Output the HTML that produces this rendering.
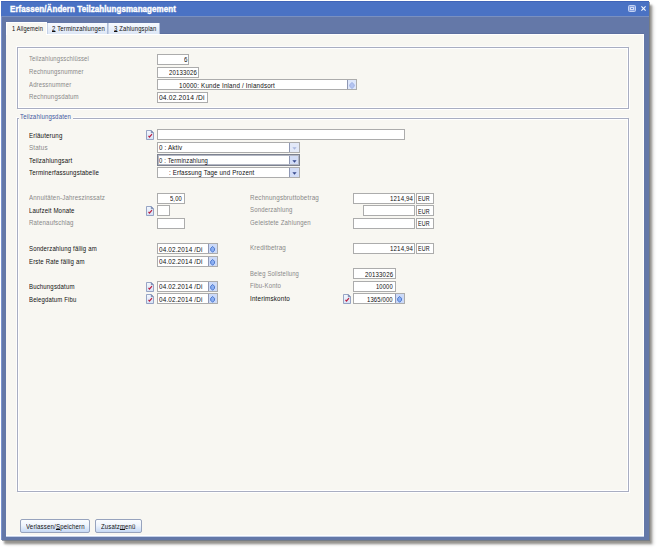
<!DOCTYPE html>
<html><head><meta charset="utf-8"><style>
html,body{margin:0;padding:0;width:658px;height:548px;overflow:hidden;background:#fff}
body{position:relative;font-family:"Liberation Sans",sans-serif}
.a{position:absolute;box-sizing:border-box}
.t{position:absolute;white-space:nowrap;line-height:1;transform-origin:0 0;letter-spacing:0.2px}
.t u{text-decoration-thickness:1px;text-underline-offset:0px}
.win{left:1px;top:1px;width:648px;height:539px;background:#6478a8;box-shadow:1px 1px 0 rgba(105,115,130,.7),3px 4px 2px rgba(95,92,85,.6),5px 5px 3px rgba(0,0,0,.1)}
.title{left:1px;top:1px;width:648px;height:15px;background:#4a72c4}
.edge{left:1px;top:16px;width:1px;height:524px;background:#7a92cc}
.panel{left:6px;top:34px;width:638px;height:502px;background:#f8f7f2;border-top:1px solid #fff;border-right:1px solid #fff;border-bottom:1px solid #fff}
.tab1{left:6px;top:22px;width:41px;height:13px;background:#f8f7f2;border:1px solid #fff;border-bottom:none}
.tab{top:23px;height:11px;background:linear-gradient(#f7faff,#dde7f6);border-left:1px solid #c6d2e6;border-right:1px solid #aebcd8}
.grp{border:1px solid #a9aec2;box-shadow:inset 1px 1px 0 #fff,inset -1px -1px 0 #fff,1px 1px 0 #fff,-1px -1px 0 #fdfdfd}
.box{background:#fff;border:1px solid #acacac}
.cbtn{background:#d3ddf7;border-left:1px solid #8f98b4}
.spin{background:#ccdaf8;border-left:1px solid #8f98b4}
.btn{border:1px solid #97a3bd;border-radius:2px;background:linear-gradient(#fbfdff 0%,#eef4fc 45%,#c6d9f5 100%)}
</style></head><body><div style="position:absolute;left:0;top:0;width:658px;height:548px">
<div class="a win"></div>
<div class="a title"></div>
<div class="a edge"></div>
<div class="a" style="left:1px;top:16px;width:648px;height:1px;background:#7a90c0"></div>
<div class="a" style="left:1px;top:1px;width:648px;height:1px;background:#4064b8"></div>
<div class="a" style="left:6px;top:33px;width:638px;height:1px;background:#5d70a0"></div>
<!-- title icons -->
<div class="a" style="left:628px;top:5px;width:8px;height:7px;border:1px solid #c4d2f2;border-radius:1.5px;background:#8aa4e2"></div>
<div class="a" style="left:630px;top:7px;width:4px;height:3px;border:1px solid #d4ddf4;border-radius:0.5px;background:#6587d4"></div>
<svg class="a" style="left:640.5px;top:6px" width="5" height="5" viewBox="0 0 5 5"><path d="M0.4 0.4L4.6 4.6M4.6 0.4L0.4 4.6" stroke="#f4f7ff" stroke-width="1.1"/></svg>

<div class="a panel"></div>
<div class="a" style="left:6px;top:536px;width:638px;height:1px;background:#c4d0e8"></div>
<div class="a tab1"></div>
<div class="a tab" style="left:47px;width:61px"></div>
<div class="a tab" style="left:108px;width:52px"></div>

<!-- group 1 -->
<div class="a grp" style="left:17px;top:47px;width:612px;height:62px"></div>
<div class="a box" style="left:157px;top:54px;width:32px;height:11px"></div>
<div class="a box" style="left:157px;top:67px;width:42px;height:11px"></div>
<div class="a box" style="left:157px;top:79px;width:200px;height:11px"></div>
<div class="a spin" style="left:347px;top:80px;width:9px;height:9px;background:#dee7fb"></div>
<div class="a box" style="left:157px;top:92px;width:51px;height:11px"></div>

<!-- group 2 -->
<div class="a grp" style="left:17px;top:118px;width:612px;height:374px"></div>
<div class="a" style="left:19px;top:116px;width:54px;height:4px;background:#f8f7f2"></div>

<div class="a box" style="left:157px;top:129px;width:248px;height:11px"></div>
<div class="a box" style="left:157px;top:142px;width:143px;height:11px"></div>
<div class="a cbtn" style="left:289px;top:143px;width:10px;height:9px;background:#e3e9f8"></div>
<div class="a box" style="left:157px;top:154px;width:143px;height:12px;border:1px solid #7d8290;box-shadow:inset 0 0 0 1px #b4b8c4"></div>
<div class="a cbtn" style="left:289px;top:156px;width:9px;height:8px"></div>
<div class="a box" style="left:157px;top:167px;width:143px;height:11px"></div>
<div class="a cbtn" style="left:289px;top:168px;width:10px;height:9px"></div>

<div class="a box" style="left:157px;top:193px;width:28px;height:11px"></div>
<div class="a box" style="left:157px;top:205px;width:13px;height:11px"></div>
<div class="a box" style="left:157px;top:218px;width:28px;height:11px"></div>

<div class="a box" style="left:353px;top:193px;width:62px;height:11px"></div>
<div class="a box" style="left:416px;top:193px;width:18px;height:11px"></div>
<div class="a box" style="left:363px;top:205px;width:52px;height:11px"></div>
<div class="a box" style="left:416px;top:205px;width:18px;height:11px"></div>
<div class="a box" style="left:353px;top:218px;width:62px;height:11px"></div>
<div class="a box" style="left:416px;top:218px;width:18px;height:11px"></div>

<div class="a box" style="left:157px;top:243px;width:61px;height:11px"></div>
<div class="a spin" style="left:208px;top:244px;width:9px;height:9px"></div>
<div class="a box" style="left:157px;top:256px;width:61px;height:11px"></div>
<div class="a spin" style="left:208px;top:257px;width:9px;height:9px"></div>

<div class="a box" style="left:353px;top:243px;width:62px;height:11px"></div>
<div class="a box" style="left:416px;top:243px;width:18px;height:11px"></div>

<div class="a box" style="left:353px;top:268px;width:43px;height:11px"></div>
<div class="a box" style="left:353px;top:281px;width:43px;height:11px"></div>
<div class="a box" style="left:353px;top:293px;width:52px;height:11px"></div>
<div class="a spin" style="left:395px;top:294px;width:9px;height:9px"></div>

<div class="a box" style="left:157px;top:281px;width:61px;height:11px"></div>
<div class="a spin" style="left:208px;top:282px;width:9px;height:9px"></div>
<div class="a box" style="left:157px;top:293px;width:61px;height:11px"></div>
<div class="a spin" style="left:208px;top:294px;width:9px;height:9px"></div>

<!-- buttons -->
<div class="a btn" style="left:20px;top:519px;width:70px;height:14px"></div>
<div class="a btn" style="left:95px;top:519px;width:47px;height:14px"></div>

<!--ICONS-->
<svg width="0" height="0" style="position:absolute"><defs><linearGradient id="dg" x1="0" y1="0" x2="0" y2="1"><stop offset="0" stop-color="#f4f8fe"/><stop offset="1" stop-color="#d6e2f6"/></linearGradient></defs></svg>
<svg class="a" style="left:146px;top:130px" width="8" height="10" viewBox="0 0 8 10"><path d="M0.5 0.5H5.2L7.5 2.8V9.5H0.5Z" fill="url(#dg)" stroke="#8090b8" stroke-width="0.8"/><path d="M5.2 0.6V2.8H7.4Z" fill="#7c8cb6" stroke="#6c7ca6" stroke-width="0.5"/><path d="M2.5 5.8L3.5 7L6 4.2" fill="none" stroke="#bc2140" stroke-width="1.15"/></svg>
<svg class="a" style="left:146px;top:206px" width="8" height="10" viewBox="0 0 8 10"><path d="M0.5 0.5H5.2L7.5 2.8V9.5H0.5Z" fill="url(#dg)" stroke="#8090b8" stroke-width="0.8"/><path d="M5.2 0.6V2.8H7.4Z" fill="#7c8cb6" stroke="#6c7ca6" stroke-width="0.5"/><path d="M2.5 5.8L3.5 7L6 4.2" fill="none" stroke="#bc2140" stroke-width="1.15"/></svg>
<svg class="a" style="left:146px;top:281.5px" width="8" height="10" viewBox="0 0 8 10"><path d="M0.5 0.5H5.2L7.5 2.8V9.5H0.5Z" fill="url(#dg)" stroke="#8090b8" stroke-width="0.8"/><path d="M5.2 0.6V2.8H7.4Z" fill="#7c8cb6" stroke="#6c7ca6" stroke-width="0.5"/><path d="M2.5 5.8L3.5 7L6 4.2" fill="none" stroke="#bc2140" stroke-width="1.15"/></svg>
<svg class="a" style="left:146px;top:293.5px" width="8" height="10" viewBox="0 0 8 10"><path d="M0.5 0.5H5.2L7.5 2.8V9.5H0.5Z" fill="url(#dg)" stroke="#8090b8" stroke-width="0.8"/><path d="M5.2 0.6V2.8H7.4Z" fill="#7c8cb6" stroke="#6c7ca6" stroke-width="0.5"/><path d="M2.5 5.8L3.5 7L6 4.2" fill="none" stroke="#bc2140" stroke-width="1.15"/></svg>
<svg class="a" style="left:343px;top:294px" width="8" height="10" viewBox="0 0 8 10"><path d="M0.5 0.5H5.2L7.5 2.8V9.5H0.5Z" fill="url(#dg)" stroke="#8090b8" stroke-width="0.8"/><path d="M5.2 0.6V2.8H7.4Z" fill="#7c8cb6" stroke="#6c7ca6" stroke-width="0.5"/><path d="M2.5 5.8L3.5 7L6 4.2" fill="none" stroke="#bc2140" stroke-width="1.15"/></svg>
<svg class="a" style="left:349.2px;top:81.6px" width="6" height="7" viewBox="0 0 6 7"><path d="M3 0.5L5.2 2.6V4.4L3 6.5L0.8 4.4V2.6Z" fill="#b4c4f0" stroke="#a0b2e6" stroke-width="1"/></svg>
<svg class="a" style="left:210px;top:246px" width="6" height="7" viewBox="0 0 6 7"><path d="M2.6 0.4L4.5 2.3V4.3L2.6 6.3L0.7 4.3V2.3Z" fill="#8cb0f2" stroke="#4470c8" stroke-width="0.9"/></svg>
<svg class="a" style="left:210px;top:259px" width="6" height="7" viewBox="0 0 6 7"><path d="M2.6 0.4L4.5 2.3V4.3L2.6 6.3L0.7 4.3V2.3Z" fill="#8cb0f2" stroke="#4470c8" stroke-width="0.9"/></svg>
<svg class="a" style="left:210px;top:284px" width="6" height="7" viewBox="0 0 6 7"><path d="M2.6 0.4L4.5 2.3V4.3L2.6 6.3L0.7 4.3V2.3Z" fill="#8cb0f2" stroke="#4470c8" stroke-width="0.9"/></svg>
<svg class="a" style="left:210px;top:296px" width="6" height="7" viewBox="0 0 6 7"><path d="M2.6 0.4L4.5 2.3V4.3L2.6 6.3L0.7 4.3V2.3Z" fill="#8cb0f2" stroke="#4470c8" stroke-width="0.9"/></svg>
<svg class="a" style="left:397px;top:296px" width="6" height="7" viewBox="0 0 6 7"><path d="M2.6 0.4L4.5 2.3V4.3L2.6 6.3L0.7 4.3V2.3Z" fill="#8cb0f2" stroke="#4470c8" stroke-width="0.9"/></svg>
<svg class="a" style="left:292px;top:146.5px" width="5" height="3" viewBox="0 0 5 3"><path d="M0.4 0.2H4.6L2.5 2.8Z" fill="#a9b6de"/></svg>
<svg class="a" style="left:292px;top:159.5px" width="5" height="3" viewBox="0 0 5 3"><path d="M0.4 0.2H4.6L2.5 2.8Z" fill="#34478c"/></svg>
<svg class="a" style="left:292px;top:172px" width="5" height="3" viewBox="0 0 5 3"><path d="M0.4 0.2H4.6L2.5 2.8Z" fill="#34478c"/></svg>
<!--/ICONS-->
<div class="t" style="left:10.00px;top:4.72px;font-size:8.6px;color:#ffffff;font-weight:bold;transform:scaleX(0.925);letter-spacing:0.1px;-webkit-text-stroke:0.4px #fff">Erfassen/Ändern Teilzahlungsmanagement</div>
<div class="t" style="left:11.50px;top:24.50px;font-size:7.8px;color:#101010;font-weight:normal;transform:scaleX(0.729);">1 Allgemein</div>
<div class="t" style="left:52.00px;top:24.80px;font-size:7.8px;color:#101010;font-weight:normal;transform:scaleX(0.766);"><u>2</u> Terminzahlungen</div>
<div class="t" style="left:113.70px;top:24.80px;font-size:7.8px;color:#101010;font-weight:normal;transform:scaleX(0.757);"><u>3</u> Zahlungsplan</div>
<div class="t" style="left:29.00px;top:55.30px;font-size:7.8px;color:#888888;font-weight:normal;transform:scaleX(0.758);">Teilzahlungsschlüssel</div>
<div class="t" style="left:29.00px;top:68.30px;font-size:7.8px;color:#888888;font-weight:normal;transform:scaleX(0.769);">Rechnungsnummer</div>
<div class="t" style="left:29.00px;top:80.50px;font-size:7.8px;color:#888888;font-weight:normal;transform:scaleX(0.765);">Adressnummer</div>
<div class="t" style="left:29.00px;top:92.80px;font-size:7.8px;color:#888888;font-weight:normal;transform:scaleX(0.779);">Rechnungsdatum</div>
<div class="t" style="left:183.70px;top:56.00px;font-size:7.8px;color:#101010;font-weight:normal;transform:scaleX(0.792);">6</div>
<div class="t" style="left:168.50px;top:69.00px;font-size:7.8px;color:#101010;font-weight:normal;transform:scaleX(0.771);">20133026</div>
<div class="t" style="left:179.40px;top:81.50px;font-size:7.8px;color:#101010;font-weight:normal;transform:scaleX(0.806);">10000: Kunde Inland / Inlandsort</div>
<div class="t" style="left:158.80px;top:94.00px;font-size:7.8px;color:#101010;font-weight:normal;transform:scaleX(0.854);">04.02.2014 /Di</div>
<div class="t" style="left:20.30px;top:113.40px;font-size:7.8px;color:#4258a0;font-weight:normal;transform:scaleX(0.775);">Teilzahlungsdaten</div>
<div class="t" style="left:29.30px;top:131.50px;font-size:7.8px;color:#101010;font-weight:normal;transform:scaleX(0.788);">Erläuterung</div>
<div class="t" style="left:29.30px;top:143.90px;font-size:7.8px;color:#888888;font-weight:normal;transform:scaleX(0.802);">Status</div>
<div class="t" style="left:29.30px;top:156.60px;font-size:7.8px;color:#101010;font-weight:normal;transform:scaleX(0.789);">Teilzahlungsart</div>
<div class="t" style="left:29.30px;top:169.30px;font-size:7.8px;color:#101010;font-weight:normal;transform:scaleX(0.786);">Terminerfassungstabelle</div>
<div class="t" style="left:158.70px;top:144.30px;font-size:7.8px;color:#101010;font-weight:normal;transform:scaleX(0.800);">0 : Aktiv</div>
<div class="t" style="left:158.70px;top:157.00px;font-size:7.8px;color:#101010;font-weight:normal;transform:scaleX(0.756);">0 : Terminzahlung</div>
<div class="t" style="left:168.70px;top:169.00px;font-size:7.8px;color:#101010;font-weight:normal;transform:scaleX(0.790);">: Erfassung Tage und Prozent</div>
<div class="t" style="left:29.40px;top:194.00px;font-size:7.8px;color:#888888;font-weight:normal;transform:scaleX(0.788);">Annuitäten-Jahreszinssatz</div>
<div class="t" style="left:29.40px;top:206.80px;font-size:7.8px;color:#101010;font-weight:normal;transform:scaleX(0.780);">Laufzeit Monate</div>
<div class="t" style="left:29.40px;top:218.70px;font-size:7.8px;color:#888888;font-weight:normal;transform:scaleX(0.783);">Ratenaufschlag</div>
<div class="t" style="left:169.80px;top:195.00px;font-size:7.8px;color:#101010;font-weight:normal;transform:scaleX(0.744);">5,00</div>
<div class="t" style="left:250.00px;top:194.00px;font-size:7.8px;color:#888888;font-weight:normal;transform:scaleX(0.805);">Rechnungsbruttobetrag</div>
<div class="t" style="left:250.00px;top:206.30px;font-size:7.8px;color:#888888;font-weight:normal;transform:scaleX(0.772);">Sonderzahlung</div>
<div class="t" style="left:250.00px;top:218.90px;font-size:7.8px;color:#888888;font-weight:normal;transform:scaleX(0.778);">Geleistete Zahlungen</div>
<div class="t" style="left:389.80px;top:195.00px;font-size:7.8px;color:#101010;font-weight:normal;transform:scaleX(0.781);">1214,94</div>
<div class="t" style="left:417.60px;top:195.00px;font-size:7.8px;color:#101010;font-weight:normal;transform:scaleX(0.686);">EUR</div>
<div class="t" style="left:417.60px;top:207.50px;font-size:7.8px;color:#101010;font-weight:normal;transform:scaleX(0.686);">EUR</div>
<div class="t" style="left:417.60px;top:220.00px;font-size:7.8px;color:#101010;font-weight:normal;transform:scaleX(0.686);">EUR</div>
<div class="t" style="left:29.40px;top:245.00px;font-size:7.8px;color:#101010;font-weight:normal;transform:scaleX(0.768);">Sonderzahlung fällig am</div>
<div class="t" style="left:29.40px;top:257.70px;font-size:7.8px;color:#101010;font-weight:normal;transform:scaleX(0.772);">Erste Rate fällig am</div>
<div class="t" style="left:158.50px;top:245.50px;font-size:7.8px;color:#101010;font-weight:normal;transform:scaleX(0.813);">04.02.2014 /Di</div>
<div class="t" style="left:158.50px;top:258.00px;font-size:7.8px;color:#101010;font-weight:normal;transform:scaleX(0.813);">04.02.2014 /Di</div>
<div class="t" style="left:250.00px;top:244.40px;font-size:7.8px;color:#888888;font-weight:normal;transform:scaleX(0.802);">Kreditbetrag</div>
<div class="t" style="left:389.80px;top:245.30px;font-size:7.8px;color:#101010;font-weight:normal;transform:scaleX(0.781);">1214,94</div>
<div class="t" style="left:417.60px;top:245.30px;font-size:7.8px;color:#101010;font-weight:normal;transform:scaleX(0.686);">EUR</div>
<div class="t" style="left:250.00px;top:270.00px;font-size:7.8px;color:#888888;font-weight:normal;transform:scaleX(0.747);">Beleg Sollstellung</div>
<div class="t" style="left:250.00px;top:282.30px;font-size:7.8px;color:#888888;font-weight:normal;transform:scaleX(0.772);">Fibu-Konto</div>
<div class="t" style="left:250.00px;top:295.20px;font-size:7.8px;color:#101010;font-weight:normal;transform:scaleX(0.810);">Interimskonto</div>
<div class="t" style="left:364.80px;top:270.50px;font-size:7.8px;color:#101010;font-weight:normal;transform:scaleX(0.777);">20133026</div>
<div class="t" style="left:376.30px;top:283.20px;font-size:7.8px;color:#101010;font-weight:normal;transform:scaleX(0.740);">10000</div>
<div class="t" style="left:366.90px;top:295.80px;font-size:7.8px;color:#101010;font-weight:normal;transform:scaleX(0.756);">1365/000</div>
<div class="t" style="left:29.10px;top:282.90px;font-size:7.8px;color:#101010;font-weight:normal;transform:scaleX(0.773);">Buchungsdatum</div>
<div class="t" style="left:29.10px;top:295.50px;font-size:7.8px;color:#101010;font-weight:normal;transform:scaleX(0.765);">Belegdatum Fibu</div>
<div class="t" style="left:158.50px;top:283.00px;font-size:7.8px;color:#101010;font-weight:normal;transform:scaleX(0.813);">04.02.2014 /Di</div>
<div class="t" style="left:158.50px;top:295.50px;font-size:7.8px;color:#101010;font-weight:normal;transform:scaleX(0.813);">04.02.2014 /Di</div>
<div class="t" style="left:25.90px;top:523.00px;font-size:7.8px;color:#101010;font-weight:normal;transform:scaleX(0.779);">Verlassen/<u>S</u>peichern</div>
<div class="t" style="left:101.00px;top:523.00px;font-size:7.8px;color:#101010;font-weight:normal;transform:scaleX(0.768);">Zusatz<u>m</u>enü</div>
</div></body></html>
